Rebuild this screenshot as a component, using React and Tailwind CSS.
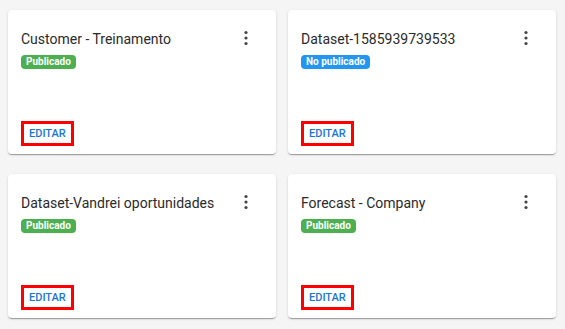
const datasets = [
  { name: 'Customer - Treinamento', published: true },
  { name: 'Dataset-1585939739533', published: false },
  { name: 'Dataset-Vandrei oportunidades', published: true },
  { name: 'Forecast - Company', published: true },
]

function DotsIcon() {
  return (
    <svg width="24" height="24" viewBox="0 0 24 24" className="fill-[#444]">
      <circle cx="12" cy="6.5" r="1.6" />
      <circle cx="12" cy="12" r="1.6" />
      <circle cx="12" cy="17.5" r="1.6" />
    </svg>
  )
}

function DatasetCard({ name, published }) {
  return (
    <div className="flex h-[144px] w-[268px] flex-col rounded bg-white pl-[13px] pr-[18px] pt-[16px] pb-[8px] shadow-[0_2px_1px_-1px_rgba(0,0,0,0.2),0_1px_1px_0_rgba(0,0,0,0.14),0_1px_3px_0_rgba(0,0,0,0.12)]">
      <div className="flex items-start justify-between">
        <div className="flex flex-col">
          <span className="text-[14px] leading-[26px] text-[#2a2a2a]">{name}</span>
          <span
            className={`mt-[3px] w-fit rounded-[4px] px-[5px] text-[10px] font-bold leading-[14px] text-white ${
              published ? 'bg-[#4caf50]' : 'bg-[#2196f3]'
            }`}
          >
            {published ? 'Publicado' : 'No publicado'}
          </span>
        </div>
        <DotsIcon />
      </div>
      <div className="mt-auto">
        <button className="border-[3px] border-[#ff0000] px-[5px] text-[11px] font-medium leading-[19px] text-[#1976d2]">
          EDITAR
        </button>
      </div>
    </div>
  )
}

export default function App() {
  return (
    <div className="min-h-[329px] w-[565px] bg-[#f5f5f5] px-2 pt-[10px] font-['Roboto',sans-serif]">
      <div className="grid grid-cols-[268px_268px] gap-x-3 gap-y-5">
        {datasets.map((d) => (
          <DatasetCard key={d.name} {...d} />
        ))}
      </div>
    </div>
  )
}
